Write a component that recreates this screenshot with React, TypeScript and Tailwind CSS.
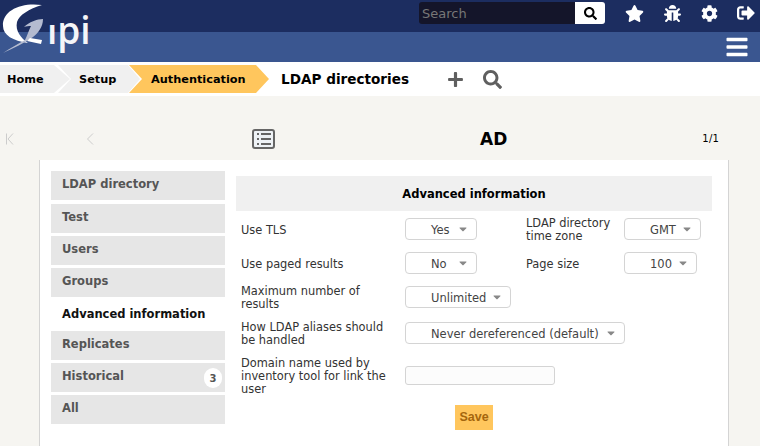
import type { ReactNode } from "react";
import { FaBars, FaBug, FaCaretDown, FaCog, FaPlus, FaSearch, FaSignOutAlt, FaStar } from "react-icons/fa";

const tabs = ["LDAP directory", "Test", "Users", "Groups", "Advanced information", "Replicates", "Historical", "All"];

function Logo() {
  return (
    <div className="absolute left-0 top-0 h-[56px] w-[100px]">
      <svg width="50" height="56" viewBox="0 0 50 56" className="absolute left-0 top-0">
        <path d="M42 5C22 2 2 10 3 26C3 35 13 41 28 43C21 38 15 31 17 22C19 15 29 9 42 5Z" fill="#fff" />
        <path d="M24 27C29 22 37 19 43 19C43 27 38 33 33 37C26 42 12 49 3 53C10 48 18 44 25 40C27 36 29 30 31 26C29 26 26 26 24 27Z" fill="#b4bbd0" />
        <path d="M30 38L42 40L41 44L27 41Z" fill="#fff" />
      </svg>
      <div className="absolute left-[47px] top-[6px] font-['Open_Sans',sans-serif] text-[37px] leading-[48px] font-semibold text-[#f4f5f8]">
        <span className="inline-block origin-[50%_79%] scale-y-[0.7]">l</span>pi
      </div>
    </div>
  );
}

function Select({ value, width }: { value: string; width: string }) {
  return (
    <div className={`flex h-[22px] items-center justify-between rounded-[4px] border border-[#d4d4d4] bg-white pl-[25px] pr-[7px] text-[11.5px] text-[#444] ${width}`}>
      <span className="pt-[2px]">{value}</span>
      <FaCaretDown className="text-[12px] text-[#888]" />
    </div>
  );
}

function Label({ children }: { children: ReactNode }) {
  return <div className="pt-[2px]">{children}</div>;
}

function Crumb({ label, className }: { label: string; className: string }) {
  return (
    <div className={`flex h-[28px] items-center text-[11.3px] font-bold text-black ${className}`}>
      {label}
    </div>
  );
}

function ThinChevron({ bar }: { bar?: boolean }) {
  return (
    <svg width="8" height="12" viewBox="0 0 8 12" fill="none" stroke="#ccc" strokeWidth="1">
      {bar && <path d="M0.5 0.5V11.5" />}
      <path d={bar ? "M7 0.5L2 6L7 11.5" : "M7 0.5L1.5 6L7 11.5"} />
    </svg>
  );
}

export default function App() {
  return (
    <div className="relative h-[446px] w-[760px] overflow-hidden bg-[#f6f5f1] font-['DejaVu_Sans',sans-serif] text-[11.4px] leading-[13px]">
      {/* top bars */}
      <div className="flex h-[32px] items-center bg-[#1c2d60] pb-[6px] pl-[419px] text-white">
        <div className="flex h-[22px] w-[186px] overflow-hidden rounded-[3px]">
          <div className="flex-1 bg-[#14152a] pl-[3px] pt-px text-[13px] leading-[22px] text-[#777]">Search</div>
          <div className="flex w-[30px] items-center justify-center bg-white text-[13px] text-black">
            <FaSearch />
          </div>
        </div>
        <FaStar className="ml-[20px] text-[19px]" />
        <FaBug className="ml-[20px] text-[17px]" />
        <FaCog className="ml-[20px] text-[17px]" />
        <FaSignOutAlt className="ml-[19px] text-[18px]" />
      </div>
      <div className="flex h-[30px] items-center justify-end bg-[#3a5690] pr-[11px] pb-[1px] text-white">
        <FaBars className="text-[24px]" />
      </div>
      <Logo />

      {/* breadcrumb */}
      <div className="flex h-[34px] items-center bg-white">
        <Crumb label="Home" className="w-[70px] bg-[#f0f0f0] pl-[7px] [clip-path:polygon(0_0,54px_0,70px_50%,54px_100%,0_100%)]" />
        <Crumb label="Setup" className="-ml-[12px] w-[82px] bg-[#f0f0f0] pl-[21px] [clip-path:polygon(0_0,70px_0,82px_50%,70px_100%,0_100%,13px_50%)]" />
        <Crumb label="Authentication" className="-ml-[11px] w-[140px] bg-[#ffc65d] pl-[22px] [clip-path:polygon(0_0,127px_0,140px_50%,127px_100%,0_100%,13px_50%)]" />
        <div className="ml-[12px] w-[128px] text-[13.6px] font-bold whitespace-nowrap text-black">LDAP directories</div>
        <FaPlus className="ml-[38px] text-[17px] text-[#5f5f5f]" />
        <FaSearch className="ml-[19px] text-[19px] text-[#5f5f5f]" />
      </div>

      {/* pager */}
      <div className="flex h-[64px] items-center pt-[21px] pl-[6px]">
        <div className="w-[80px]"><ThinChevron bar /></div>
        <ThinChevron />
        <svg width="23" height="20" viewBox="0 0 23 20" className="ml-[158px]">
          <rect x="1" y="1" width="21" height="18" rx="2" fill="#eef2f6" stroke="#666" strokeWidth="2" />
          <path d="M5 5H7M5 10H7M5 15H7M9 5H19M9 10H19M9 15H19" stroke="#666" strokeWidth="2" />
        </svg>
        <div className="ml-[205px] text-[17px] leading-[20px] font-bold text-black">AD</div>
        <div className="ml-[195px] text-[10px] tracking-[0.3px] text-black">1/1</div>
      </div>

      {/* panel */}
      <div className="ml-[39px] flex h-[286px] w-[690px] border-x border-[#d4d4d4] bg-white pl-[11px] pt-[11px]">
        <div className="flex w-[174px] flex-col">
          {tabs.map((t, i) => {
            const active = t === "Advanced information";
            return (
              <div
                key={t}
                className={`relative h-[29px] pl-[11px] text-[11.5px] font-bold ${i === 0 ? "mb-[4px]" : active ? "mb-[2px]" : "mb-[3px]"} ${active ? "bg-white pt-[8px] text-[#111]" : "bg-[#e6e6e6] pt-[7px] text-[#555]"}`}
              >
                {t}
                {t === "Historical" && (
                  <span className="absolute right-[3px] top-[5px] flex h-[20px] w-[18px] items-center justify-center rounded-full bg-white text-[10px] text-[#555]">3</span>
                )}
              </div>
            );
          })}
        </div>

        <div className="ml-[11px] w-[476px] pt-[5px] text-[#333]">
          <div className="flex h-[35px] items-center justify-center bg-[#f0f0f0] pt-px text-[11.5px] font-bold text-black">
            Advanced information
          </div>
          <div className="grid grid-cols-[164px_121px_98px_1fr] grid-rows-[34px_34px_34px_38px_46px] items-center pl-[5px] pt-px">
            <Label>Use TLS</Label>
            <Select value="Yes" width="w-[72px]" />
            <Label>LDAP directory<br />time zone</Label>
            <Select value="GMT" width="w-[77px]" />

            <Label>Use paged results</Label>
            <Select value="No" width="w-[72px]" />
            <Label>Page size</Label>
            <Select value="100" width="w-[73px]" />

            <Label>Maximum number of<br />results</Label>
            <div className="col-span-3"><Select value="Unlimited" width="w-[106px]" /></div>

            <Label>How LDAP aliases should<br />be handled</Label>
            <div className="col-span-3"><Select value="Never dereferenced (default)" width="w-[220px]" /></div>

            <Label>Domain name used by<br />inventory tool for link the<br />user</Label>
            <div className="col-span-3"><div className="h-[19px] w-[150px] rounded-[3px] border border-[#d4d4d4] bg-[#fcfcfc]" /></div>
          </div>
          <div className="mt-[7px] flex justify-center">
            <div className="flex h-[25px] w-[38px] items-center justify-center bg-[#ffc65d] font-['Liberation_Sans',sans-serif] text-[12.5px] font-bold text-[#a5660d]">Save</div>
          </div>
        </div>
      </div>
    </div>
  );
}
